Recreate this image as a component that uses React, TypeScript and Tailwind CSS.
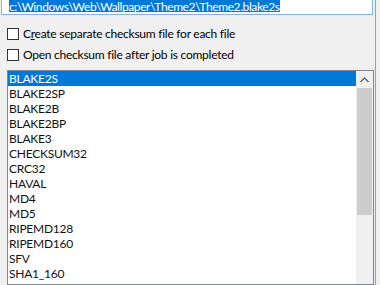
import React from "react"

const algorithms = [
  "BLAKE2S",
  "BLAKE2SP",
  "BLAKE2B",
  "BLAKE2BP",
  "BLAKE3",
  "CHECKSUM32",
  "CRC32",
  "HAVAL",
  "MD4",
  "MD5",
  "RIPEMD128",
  "RIPEMD160",
  "SFV",
  "SHA1_160",
  "SHA1_224",
]

function CheckRow({ children }: { children: React.ReactNode }) {
  return (
    <div className="flex items-center h-[21px] shrink-0 pl-[7px]">
      <div className="w-[12px] h-[12px] border border-[#333333] bg-white shrink-0" />
      <span className="ml-[4px] text-[#000000] leading-none">{children}</span>
    </div>
  )
}

export default function App() {
  return (
    <div className="w-[380px] h-[285px] overflow-hidden bg-[#f0f0f0] flex font-['Lato',sans-serif] text-[12px] tracking-[-0.25px]">
      <div className="w-[376px] border-r border-[#a0a0a0] flex flex-col">
        <div className="shrink-0 ml-[1px] w-[372px] mt-[-8px] h-[23px] border border-[#7eb4ea] bg-white pl-[7px] pt-[7px] leading-[12px]">
          <div className="inline-block bg-[#0078d7] text-white leading-[13px] h-[12px] tracking-[-0.4px]">
            c:\Windows\Web\Wallpaper\Theme2\Theme2.blake2s
          </div>
        </div>

        <div className="shrink-0 mt-[8px] flex flex-col">
          <CheckRow>
            C<span className="underline">r</span>eate separate checksum file for each file
          </CheckRow>
          <CheckRow>Open checksum file after job is completed</CheckRow>
        </div>

        <div className="mt-[5px] ml-[7px] w-[367px] flex-1 min-h-0 overflow-hidden border border-[#828790] bg-white flex">
          <div className="flex-1 flex flex-col">
            {algorithms.map((name, i) => (
              <div
                key={name}
                className={
                  i === 0
                    ? "shrink-0 h-[15px] pl-[1px] pt-[1px] bg-[#0078d7] text-white leading-[14px]"
                    : "shrink-0 h-[15px] pl-[1px] pt-[1px] text-[#111111] leading-[14px]"
                }
              >
                {name}
              </div>
            ))}
          </div>
          <div className="w-[17px] bg-[#f0f0f0] flex flex-col">
            <div className="shrink-0 h-[17px] flex items-center justify-center">
              <svg width="9" height="6" viewBox="0 0 9 6">
                <path d="M0.5 5 L4.5 1 L8.5 5" fill="none" stroke="#606060" strokeWidth="1.3" />
              </svg>
            </div>
            <div className="shrink-0 mx-[1px] h-[127px] bg-[#cdcdcd]" />
          </div>
        </div>
      </div>
    </div>
  )
}
